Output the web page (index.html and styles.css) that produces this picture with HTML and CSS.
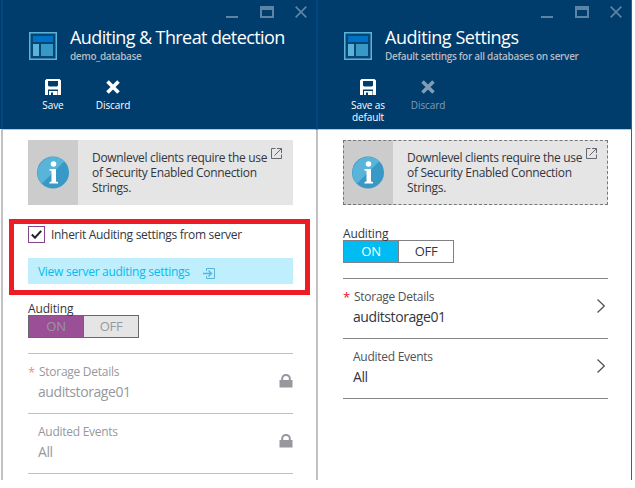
FILE: index.html
```html
<!DOCTYPE html>
<html lang="en">
<head>
<meta charset="utf-8">
<title>Auditing settings</title>
<link rel="stylesheet" href="styles.css">
</head>
<body>
<svg class="defs" width="0" height="0" aria-hidden="true">
  <symbol id="winbtns" viewBox="0 0 82 12">
    <path d="M0 10h12v2H0z"/>
    <path d="M34 0h14v12H34zM36 4v6h10V4z" fill-rule="evenodd"/>
    <path d="M69.7.7 80.300 11.300M80.300.7 69.700 11.300" fill="none" stroke="currentColor" stroke-width="1.700"/>
  </symbol>
  <symbol id="blade" viewBox="0 0 28 28">
    <path d="M.75.75h26.500v26.500H.75z" fill="#0a4674" stroke="#59b4d9" stroke-width="1.500"/>
    <path d="M4 4h20v6H4z" fill="#0072c6"/>
    <path d="M4 12h6v12H4z" fill="#59b4d9"/>
    <path d="M12 12h12v12H12z" fill="#3999c6"/>
  </symbol>
  <symbol id="save" viewBox="0 0 16 16">
    <path fill-rule="evenodd" d="M1.500 0H14.500L16 1.500V16H13V10.500H3V16H0V1.500ZM3 2V6.500L4 7.500H12L13 6.500V2Z"/>
    <path d="M4 12h8.500v4H8v-2.500H6V16H4z"/>
  </symbol>
  <symbol id="discard" viewBox="0 0 14 14">
    <path d="M1.500 1.500 12.500 12.500M12.500 1.500 1.500 12.500" fill="none" stroke="currentColor" stroke-width="3.600"/>
  </symbol>
  <symbol id="info" viewBox="0 0 32 33">
    <circle cx="16" cy="16.500" r="16" fill="#3999c6"/>
    <path d="M4.700 27.800A16 16 0 0 1 27.300 5.200Z" fill="#59b4d9"/>
    <circle cx="16.500" cy="8" r="2.800" fill="#fff"/>
    <path d="M12.500 13H19v12.500l2 .5v1.500h-8.500V26l2-.5V15l-2-.5z" fill="#fff"/>
  </symbol>
  <symbol id="external" viewBox="0 0 11 11">
    <path d="M4.500.5h-4v10h10v-4M6 .5h4.500V5M10.500.5 3.500 7.500" fill="none" stroke="#666870"/>
  </symbol>
  <symbol id="enter" viewBox="0 0 13 13">
    <path d="M3.500 4V1.500h8v10h-8V9" fill="none" stroke="#59b4d9"/>
    <path d="M0 6.500h8M5.500 3.500l3 3-3 3" fill="none" stroke="#59b4d9" stroke-width="1.300"/>
  </symbol>
  <symbol id="lock" viewBox="0 0 14 14">
    <path d="M.5 6h13v7.500H.5z"/>
    <path d="M3.200 7V4.500a3.800 3.600 0 0 1 7.600 0V7" fill="none" stroke="currentColor" stroke-width="2"/>
  </symbol>
  <symbol id="chevron" viewBox="0 0 8 14">
    <path d="M.5.5 7.300 7 .5 13.500" fill="none" stroke="currentColor" stroke-width="1.200"/>
  </symbol>
</svg>
<div class="stage">
  <section class="panel">
    <header class="head">
      <div class="window"><svg width="82" height="12"><use href="#winbtns"/></svg></div>
      <div class="heading">
        <svg width="28" height="28"><use href="#blade"/></svg>
        <div><h1 class="t-main">Auditing &amp; Threat detection</h1><p class="t-db">demo_database</p></div>
      </div>
      <div class="commands">
        <div class="command"><svg width="16" height="16"><use href="#save"/></svg><span>Save</span></div>
        <div class="command"><svg width="14" height="16"><use href="#discard"/></svg><span>Discard</span></div>
      </div>
    </header>
    <div class="content">
      <div class="notice">
        <div class="notice-icon"><svg width="32" height="33"><use href="#info"/></svg></div>
        <p>Downlevel clients require the use<br>of Security Enabled Connection<br>Strings.</p>
        <svg class="ext" width="11" height="11"><use href="#external"/></svg>
      </div>
      <div class="inherit">
        <span class="check"><svg width="11" height="9" viewBox="0 0 11 9"><path d="M.8 4.500 4 7.700 10.200.8" fill="none" stroke="#222" stroke-width="2"/></svg></span>
        <span class="t-inherit">Inherit Auditing settings from server</span>
      </div>
      <div class="link"><span>View server auditing settings</span><svg width="13" height="13"><use href="#enter"/></svg></div>
      <div class="label">Auditing</div>
      <div class="toggle disabled"><span class="on">ON</span><span>OFF</span></div>
      <div class="rows locked">
        <div class="row"><div><div class="key req"><i>*</i>Storage Details</div><div class="val">auditstorage01</div></div><svg width="14" height="14"><use href="#lock"/></svg></div>
        <div class="row"><div><div class="key">Audited Events</div><div class="val all">All</div></div><svg width="14" height="14"><use href="#lock"/></svg></div>
      </div>
    </div>
    <div class="highlight"></div>
  </section>
  <section class="panel last">
    <header class="head">
      <div class="window"><svg width="82" height="12"><use href="#winbtns"/></svg></div>
      <div class="heading">
        <svg width="28" height="28"><use href="#blade"/></svg>
        <div><h1 class="t-set">Auditing Settings</h1><p class="t-def">Default settings for all databases on server</p></div>
      </div>
      <div class="commands">
        <div class="command"><svg width="16" height="16"><use href="#save"/></svg><span>Save as<br>default</span></div>
        <div class="command off"><svg width="14" height="16"><use href="#discard"/></svg><span>Discard</span></div>
      </div>
    </header>
    <div class="content">
      <div class="notice dashed">
        <div class="notice-icon"><svg width="32" height="33"><use href="#info"/></svg></div>
        <p>Downlevel clients require the use<br>of Security Enabled Connection<br>Strings.</p>
        <svg class="ext" width="11" height="11"><use href="#external"/></svg>
      </div>
      <div class="label">Auditing</div>
      <div class="toggle"><span class="on">ON</span><span>OFF</span></div>
      <div class="rows">
        <div class="row"><div><div class="key req"><i>*</i>Storage Details</div><div class="val">auditstorage01</div></div><svg class="chev" width="8" height="14"><use href="#chevron"/></svg></div>
        <div class="row"><div><div class="key">Audited Events</div><div class="val all">All</div></div><svg class="chev" width="8" height="14"><use href="#chevron"/></svg></div>
      </div>
    </div>
  </section>
</div>
</body>
</html>
```
FILE: styles.css
```css
* { box-sizing: border-box; }
body { margin: 0; background: #fff; font-family: "Open Sans", "Noto Sans", sans-serif; color: #333640; white-space: nowrap; overflow: hidden; }
h1, p { margin: 0; font-weight: 400; }
svg { display: block; flex: none; fill: currentColor; }
.defs { position: absolute; }
.stage { display: flex; width: 632px; height: 480px; padding-left: 1px; background: linear-gradient(#003c6c 129px, #fff 129px); }
.panel { position: relative; width: 315px; height: 480px; border-left: 2px solid #c1c1c1; border-image: linear-gradient(#004881 129px, #c1c1c1 129px) 1; background: #fff; }
.last { width: 316px; border-right: 1px solid #0072c6; border-image: none; border-left-color: #c1c1c1; }
.head { height: 130px; background: #003c6c; border-bottom: 1px solid #b7c7d5; color: #fff; }
.last .head { margin-left: -2px; border-left: 2px solid #004881; }
.window { display: flex; justify-content: flex-end; height: 25px; padding: 6px 8px 0 0; color: #5d84a4; }
.heading { display: flex; gap: 13px; height: 54px; padding-left: 26px; }
.last .heading { padding-left: 26px; }
.heading > svg { margin-top: 7px; }
h1 { font-size: 18px; line-height: 24px; }
.t-main { letter-spacing: -.6px; }
.t-set { letter-spacing: -.45px; }
.heading p { font-size: 10px; line-height: 14px; font-weight: 600; color: #b3bbc2; }
.heading .t-db { letter-spacing: -.38px; }
.heading .t-def { letter-spacing: -.3px; }
.commands { display: flex; padding-left: 20px; }
.command { display: flex; flex-direction: column; align-items: center; width: 60px; gap: 4px; font-size: 10px; line-height: 12px; letter-spacing: -.1px; text-align: center; }
.off { color: #809db5; }
.content { padding: 10px 23px 0 25px; }
.notice { position: relative; display: flex; height: 65px; background: #e5e5e5; }
.notice-icon { display: grid; place-items: center; width: 50px; background: #ccc; }
.notice p { padding: 10px 0 0 14px; font-size: 12px; line-height: 15px; letter-spacing: -.32px; }
.ext { position: absolute; right: 11px; top: 8px; }
.dashed::after { content: ""; position: absolute; inset: 0; border: 1px dashed #777; }
.inherit { display: flex; gap: 6px; height: 17px; margin-top: 21px; font-size: 12px; line-height: 17px; letter-spacing: -.3px; }
.check { display: grid; place-items: center; width: 17px; border: 1px solid #85458b; }
.link { display: flex; align-items: center; gap: 13px; height: 26px; margin: 15px 0 16px; padding: 1px 0 0 10px; background: #bfeefd; color: #00bcf2; font-size: 12px; letter-spacing: -.28px; }
.link svg { margin-top: 4px; }
.label { height: 15px; font-size: 12px; line-height: 18px; letter-spacing: -.15px; }
.toggle { display: grid; grid-template-columns: 55px 1fr; width: 111px; height: 23px; border: 1px solid #7f8187; font-size: 13px; line-height: 21px; letter-spacing: -.3px; text-align: center; }
.toggle .on { background: #00bcf2; color: #fff; border-right: 1px solid #7f8187; }
.disabled { background: #e5e5e5; border-color: #68686c; color: #97999d; }
.disabled .on { background: #9b4f96; color: #97999d; border-color: #68686c; }
.rows { margin-top: 15px; border-top: 1px solid #86878b; }
.row { display: flex; justify-content: space-between; height: 60px; padding: 9px 0 0 10px; border-bottom: 1px solid #86878b; }
.key { position: relative; height: 19px; font-size: 12px; line-height: 18px; letter-spacing: -.27px; color: #505158; }
.req { padding-left: 1px; }
.key i { position: absolute; left: -10px; top: 0; font-style: normal; font-size: 13px; color: #e81123; }
.val { font-size: 14px; line-height: 19px; letter-spacing: -.42px; }
.row svg { margin-top: 11px; }
.row .chev { margin-right: 3px; color: #505158; }
.locked, .locked .row { border-color: #c1c1c4; }
.locked, .locked .key { color: #97989d; }
.locked .key i { color: #f28891; }
.last .label { margin-top: 20px; }
.highlight { position: absolute; left: 6px; top: 219px; width: 301px; height: 76px; border: 5px solid #ed1c24; z-index: 2; }
```
